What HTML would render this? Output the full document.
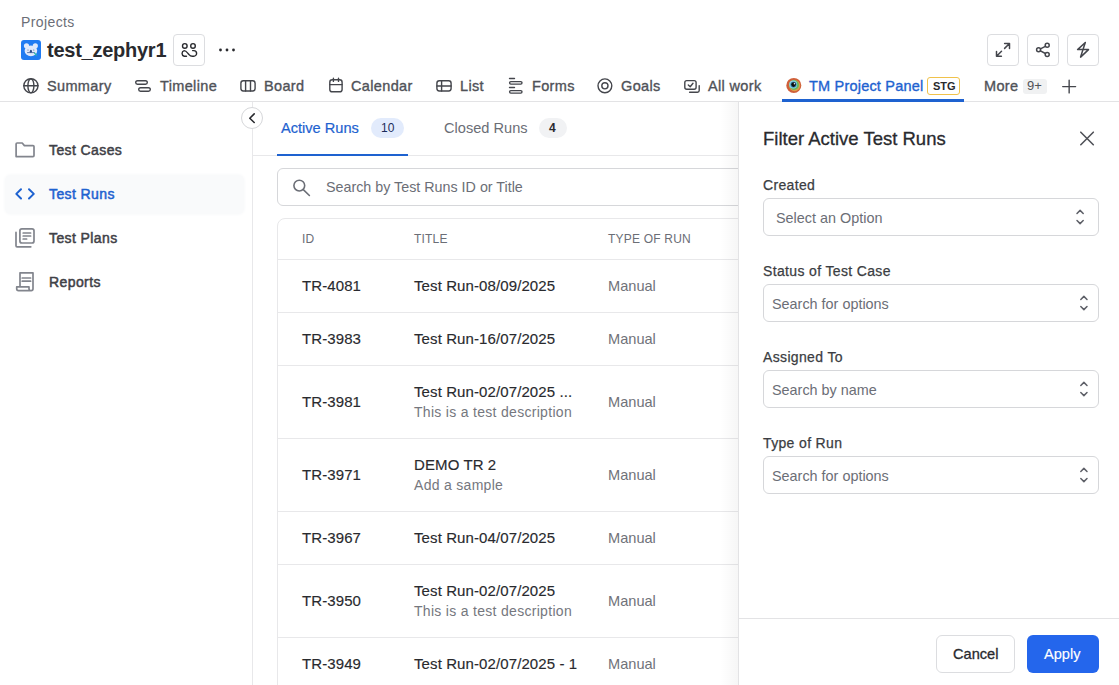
<!DOCTYPE html>
<html><head><meta charset="utf-8">
<style>
*{box-sizing:border-box;margin:0;padding:0}
html,body{width:1119px;height:685px;overflow:hidden;background:#fff;font-family:"Liberation Sans",sans-serif;color:#292a2e}
.a{position:absolute;white-space:nowrap}
.nav{font-size:14.5px;color:#505258;top:78px;line-height:16px;letter-spacing:0.35px;-webkit-text-stroke-width:0.35px}
.btn{position:absolute;border:1px solid #dcdde0;border-radius:4px;background:#fff}
.sb{font-size:14px;color:#3f4147;line-height:16px;letter-spacing:0.4px;-webkit-text-stroke-width:0.5px}
.th{font-size:12px;color:#6b6e76;line-height:14px;letter-spacing:0.2px}
.row{position:absolute;left:278px;width:462px;height:1px;background:#e8e8ea}
.id,.ti{font-size:15px;color:#292a2e;line-height:17px;-webkit-text-stroke-width:0.15px;letter-spacing:0.1px}
.de{font-size:14px;color:#75777e;line-height:17px;letter-spacing:0.3px}
.ty{font-size:14.6px;color:#707279;line-height:17px}
.lbl{font-size:14px;color:#3b3d42;line-height:16px;letter-spacing:0.35px;-webkit-text-stroke-width:0.25px}
.sel{position:absolute;left:763px;width:336px;height:38px;border:1px solid #d6d7da;border-radius:6px;background:#fff}
.ph{font-size:14.4px;color:#6b6e76;line-height:17px}
#ic{position:absolute;left:0;top:0}
</style></head><body>

<!-- header -->
<div class="a" style="left:21px;top:14px;font-size:14px;color:#6b6e76;line-height:16px;letter-spacing:0.4px">Projects</div>
<div class="a" style="left:21px;top:40px;width:20px;height:20px;border-radius:3px;background:#1f7bf2"></div>
<div class="a" style="left:47px;top:39px;font-size:20px;font-weight:bold;color:#292a2e;line-height:22px;letter-spacing:-0.25px">test_zephyr1</div>
<div class="btn" style="left:173px;top:34px;width:32px;height:32px"></div>

<div class="btn" style="left:987px;top:34px;width:32px;height:32px"></div>
<div class="btn" style="left:1027px;top:34px;width:32px;height:32px"></div>
<div class="btn" style="left:1067px;top:34px;width:32px;height:32px"></div>

<div class="a nav" style="left:47px">Summary</div>
<div class="a nav" style="left:160px">Timeline</div>
<div class="a nav" style="left:264px">Board</div>
<div class="a nav" style="left:351px">Calendar</div>
<div class="a nav" style="left:460px">List</div>
<div class="a nav" style="left:532px">Forms</div>
<div class="a nav" style="left:621px">Goals</div>
<div class="a nav" style="left:708px">All work</div>
<div class="a nav" style="left:809px;color:#1e62d0;letter-spacing:0.2px">TM Project Panel</div>
<div class="a" style="left:927px;top:77px;width:33px;height:18px;border:1px solid #f0c24b;border-radius:3px"></div>
<div class="a" style="left:933px;top:80px;font-size:11px;font-weight:bold;line-height:13px;color:#292a2e">STG</div>
<div class="a nav" style="left:984px">More</div>
<div class="a" style="left:1023px;top:79px;width:24px;height:15px;border-radius:3px;background:#f0f1f2"></div>
<div class="a" style="left:1027px;top:78px;font-size:13px;line-height:15px;color:#505258">9+</div>
<div class="a" style="left:0;top:101px;width:1119px;height:1px;background:#e3e3e5"></div>
<div class="a" style="left:782px;top:99px;width:182px;height:3px;background:#1e62d0"></div>

<!-- sidebar -->
<div class="a" style="left:252px;top:102px;width:1px;height:583px;background:#e8e8ea"></div>
<div class="a" style="left:5px;top:175px;width:239px;height:39px;border-radius:6px;background:#f9fafb;box-shadow:0 0 3px 1px #f9fafb"></div>
<div class="a sb" style="left:49px;top:142px">Test Cases</div>
<div class="a sb" style="left:49px;top:186px;color:#1e62d0">Test Runs</div>
<div class="a sb" style="left:49px;top:230px">Test Plans</div>
<div class="a sb" style="left:49px;top:274px">Reports</div>
<div class="a" style="left:241px;top:107px;width:22px;height:22px;border-radius:50%;border:1px solid #d6d7da;background:#fff"></div>

<!-- main tabs -->
<div class="a" style="left:281px;top:120px;font-size:14.6px;color:#1e62d0;line-height:17px;-webkit-text-stroke-width:0.2px">Active Runs</div>
<div class="a" style="left:371px;top:118px;width:33px;height:20px;border-radius:10px;background:#e2ebfc"></div>
<div class="a" style="left:381px;top:121px;font-size:12px;color:#1c2b5a;line-height:14px">10</div>
<div class="a" style="left:444px;top:120px;font-size:14.6px;color:#6b6e76;line-height:17px">Closed Runs</div>
<div class="a" style="left:539px;top:118px;width:28px;height:20px;border-radius:10px;background:#f1f2f4"></div>
<div class="a" style="left:549px;top:121px;font-size:12px;font-weight:bold;color:#292a2e;line-height:14px">4</div>
<div class="a" style="left:253px;top:155px;width:485px;height:1px;background:#e8e8ea"></div>
<div class="a" style="left:277px;top:154px;width:131px;height:2px;background:#1e62d0"></div>

<div class="a" style="left:277px;top:168px;width:480px;height:38px;border:1px solid #d6d7da;border-radius:6px"></div>
<div class="a" style="left:326px;top:179px;font-size:14.3px;color:#6b6e76;line-height:17px">Search by Test Runs ID or Title</div>

<div class="a" style="left:277px;top:218px;width:480px;height:500px;border:1px solid #e8e8ea;border-radius:8px"></div>
<div class="a th" style="left:302px;top:232px">ID</div>
<div class="a th" style="left:414px;top:232px">TITLE</div>
<div class="a th" style="left:608px;top:232px">TYPE OF RUN</div>

<div class="row" style="top:259px"></div>
<div class="row" style="top:312px"></div>
<div class="row" style="top:365px"></div>
<div class="row" style="top:438px"></div>
<div class="row" style="top:511px"></div>
<div class="row" style="top:564px"></div>
<div class="row" style="top:637px"></div>

<div class="a id" style="left:302px;top:277px">TR-4081</div>
<div class="a ti" style="left:414px;top:277px">Test Run-08/09/2025</div>
<div class="a ty" style="left:608px;top:278px">Manual</div>

<div class="a id" style="left:302px;top:330px">TR-3983</div>
<div class="a ti" style="left:414px;top:330px">Test Run-16/07/2025</div>
<div class="a ty" style="left:608px;top:331px">Manual</div>

<div class="a id" style="left:302px;top:393px">TR-3981</div>
<div class="a ti" style="left:414px;top:383px">Test Run-02/07/2025 ...</div>
<div class="a de" style="left:414px;top:404px">This is a test description</div>
<div class="a ty" style="left:608px;top:394px">Manual</div>

<div class="a id" style="left:302px;top:466px">TR-3971</div>
<div class="a ti" style="left:414px;top:456px">DEMO TR 2</div>
<div class="a de" style="left:414px;top:477px">Add a sample</div>
<div class="a ty" style="left:608px;top:467px">Manual</div>

<div class="a id" style="left:302px;top:529px">TR-3967</div>
<div class="a ti" style="left:414px;top:529px">Test Run-04/07/2025</div>
<div class="a ty" style="left:608px;top:530px">Manual</div>

<div class="a id" style="left:302px;top:592px">TR-3950</div>
<div class="a ti" style="left:414px;top:582px">Test Run-02/07/2025</div>
<div class="a de" style="left:414px;top:603px">This is a test description</div>
<div class="a ty" style="left:608px;top:593px">Manual</div>

<div class="a id" style="left:302px;top:655px">TR-3949</div>
<div class="a ti" style="left:414px;top:655px">Test Run-02/07/2025 - 1</div>
<div class="a ty" style="left:608px;top:656px">Manual</div>

<!-- filter panel -->
<div class="a" style="left:720px;top:102px;width:18px;height:583px;background:linear-gradient(to right,rgba(0,0,0,0),rgba(0,0,0,0.035))"></div>
<div class="a" style="left:738px;top:102px;width:381px;height:583px;background:#fff;border-left:1px solid #e3e3e5"></div>
<div class="a" style="left:763px;top:128px;font-size:18.5px;-webkit-text-stroke-width:0.3px;color:#292a2e;line-height:21px">Filter Active Test Runs</div>

<div class="a lbl" style="left:763px;top:177px">Created</div>
<div class="sel" style="top:198px"></div>
<div class="a ph" style="left:776px;top:210px">Select an Option</div>

<div class="a lbl" style="left:763px;top:263px">Status of Test Case</div>
<div class="sel" style="top:284px"></div>
<div class="a ph" style="left:772px;top:296px">Search for options</div>

<div class="a lbl" style="left:763px;top:349px">Assigned To</div>
<div class="sel" style="top:370px"></div>
<div class="a ph" style="left:772px;top:382px">Search by name</div>

<div class="a lbl" style="left:763px;top:435px">Type of Run</div>
<div class="sel" style="top:456px"></div>
<div class="a ph" style="left:772px;top:468px">Search for options</div>

<div class="a" style="left:739px;top:618px;width:380px;height:1px;background:#e3e3e5"></div>
<div class="btn" style="left:936px;top:635px;width:79px;height:38px;border-radius:6px"></div>
<div class="a" style="left:953px;top:646px;font-size:14.6px;color:#292a2e;line-height:17px;-webkit-text-stroke-width:0.3px">Cancel</div>
<div class="a" style="left:1027px;top:635px;width:72px;height:38px;border-radius:6px;background:#2466ec"></div>
<div class="a" style="left:1044px;top:646px;font-size:14.6px;color:#fff;line-height:17px;-webkit-text-stroke-width:0.15px">Apply</div>

<!-- icons overlay -->
<svg id="ic" width="1119" height="685" viewBox="0 0 1119 685" fill="none" stroke-linecap="round" stroke-linejoin="round">
  <!-- people -->
  <g stroke="#292a2e" stroke-width="1.4">
    <circle cx="184.8" cy="45.9" r="2.3"/>
    <circle cx="193" cy="45.9" r="2.3"/>
    <path d="M186.5 56.2 H184.2 a2.9 2.9 0 0 1 0 -5.6 c2.2 0 3.2 2.4 4.8 4 c0.8 0.9 1.8 1.6 3.3 1.6 h1.5 a2.8 2.8 0 0 0 0 -5.6 h-1.2"/>
  </g>
  <g fill="#292a2e"><circle cx="220.5" cy="50" r="1.4"/><circle cx="227" cy="50" r="1.4"/><circle cx="233.5" cy="50" r="1.4"/></g>
  <!-- right buttons -->
  <g stroke="#44464c" stroke-width="1.5">
    <path d="M1004.6 43.5 H1009.5 V48.4 M1009.2 43.8 L1004.6 48.4 M996.5 51.4 V56.3 H1001.4 M996.8 56 L1001.5 51.3"/>
    <circle cx="1038.6" cy="49.8" r="2"/><circle cx="1047.2" cy="45.3" r="2"/><circle cx="1047.2" cy="54.5" r="2"/>
    <path d="M1040.4 48.9 L1045.4 46.3 M1040.4 50.8 L1045.4 53.5"/>
    <path d="M1085.3 42.5 L1077.6 49.6 H1088.5 L1080.6 57.1 L1083 49.6 Z"/>
  </g>
  <!-- nav icons -->
  <g stroke="#44464c" stroke-width="1.4">
    <circle cx="30.9" cy="85.8" r="7.1"/>
    <path d="M23.8 85.8 H38"/>
    <ellipse cx="30.9" cy="85.8" rx="3" ry="7.1"/>
    <rect x="135.7" y="80.7" width="11.6" height="3.6" rx="1.8"/>
    <rect x="138.7" y="87.7" width="11.6" height="3.6" rx="1.8"/>
    <rect x="240.9" y="80.8" width="14.2" height="10.2" rx="2.4"/>
    <path d="M245.6 80.8 V91 M250.5 80.8 V91"/>
    <rect x="329.8" y="79.8" width="12.3" height="12" rx="2.4"/>
    <path d="M329.8 84.6 H342.1 M333.4 78.3 V81.4 M338.5 78.3 V81.4"/>
    <rect x="436.9" y="80.8" width="14.2" height="10.2" rx="2.4"/>
    <path d="M436.9 86 H451.1 M441.6 80.8 V91"/>
    <path d="M509.5 78.5 H514.5"/>
    <rect x="509.6" y="81.6" width="12.4" height="2.5" rx="1.25"/>
    <path d="M509.5 87.5 H514.5"/>
    <rect x="509.6" y="90.6" width="12.4" height="2.5" rx="1.25"/>
    <circle cx="604.9" cy="85.8" r="6.9"/>
    <circle cx="604.9" cy="85.8" r="3.1"/>
    <rect x="684.8" y="80.6" width="11.3" height="8.6" rx="2"/>
    <path d="M688.3 85 L690.2 86.7 L693 83.2"/>
    <path d="M699.2 85.6 V90.5 a1.7 1.7 0 0 1 -1.7 1.7 H689.6"/>
    <path d="M1062.7 86.6 H1075.6 M1069.15 80.3 V92.9"/>
  </g>
  <!-- TM eye icon -->
  <circle cx="793.8" cy="85.4" r="7.5" fill="#d0603a"/>
  <circle cx="794.6" cy="85.6" r="5.6" fill="#dda048"/>
  <circle cx="794" cy="85" r="4.9" fill="#67b85a"/>
  <circle cx="793.2" cy="84.5" r="4" fill="#9ad3e6"/>
  <circle cx="793.5" cy="84.6" r="3.2" fill="#3d9cc0"/>
  <circle cx="793.5" cy="84.6" r="2.3" fill="#0d0d0d"/>
  <circle cx="794.4" cy="83.8" r="0.7" fill="#fff"/>
  <!-- project koala -->
  <g fill="#dfe9fb">
    <circle cx="26.5" cy="45.8" r="2.6"/><circle cx="35.3" cy="45.8" r="2.6"/>
    <ellipse cx="30.9" cy="50.8" rx="6.3" ry="5.4"/>
  </g>
  <g fill="#2a4a8a"><ellipse cx="30.9" cy="51.2" rx="1.1" ry="1.5"/><circle cx="28" cy="50" r="0.5"/><circle cx="33.8" cy="50" r="0.5"/></g>
  <path d="M27.5 52.6 H34.3" stroke="#2a4a8a" stroke-width="0.7"/>
  <path d="M34.5 53 L36.3 55.2" stroke="#2bb9a8" stroke-width="1.2"/>
  <!-- collapse chevron -->
  <path d="M254.2 113.9 L249.8 118.2 L254.2 122.5" stroke="#292a2e" stroke-width="1.6"/>
  <!-- sidebar icons -->
  <g stroke="#82858d" stroke-width="1.7">
    <path d="M16.1 156.6 V144 a1 1 0 0 1 1 -1 H22.2 L24.4 145.6 H33 a1 1 0 0 1 1 1 V155.6 a1 1 0 0 1 -1 1 Z"/>
    <rect x="19.9" y="228.8" width="14.1" height="14.2" rx="2"/>
    <path d="M23.2 233 H30.6 M23.2 236 H30.6 M23.2 239 H26.6"/>
    <path d="M16 232.4 V245.8 a1 1 0 0 0 1 1 H30.8"/>
    <path d="M20 286.6 V272.8 H33 V288.8 a1.8 1.8 0 0 1 -1.8 1.8 H18.5 a1.8 1.8 0 0 1 -1.8 -1.8 V286.9 H29 V288.8 a1.8 1.8 0 0 0 1.8 1.8"/>
    <path d="M22.2 278 H30.6 M22.2 281.2 H30.6"/>
  </g>
  <path d="M21 189.3 L16.3 193.9 L21 198.5 M29 189.3 L33.8 193.9 L29 198.5" stroke="#1e62d0" stroke-width="2"/>
  <!-- search icon -->
  <g stroke="#6b6e76" stroke-width="1.6"><circle cx="299.3" cy="185.6" r="5.4"/><path d="M303.3 189.6 L309.4 195.5"/></g>
  <!-- close X -->
  <path d="M1080.8 132.2 L1093.3 144.7 M1093.3 132.2 L1080.8 144.7" stroke="#505258" stroke-width="1.6"/>
  <!-- select chevrons -->
  <g stroke="#5e6068" stroke-width="1.5">
    <path d="M1077 213.5 L1080.1 210.4 L1083.2 213.5 M1077 220.5 L1080.1 223.6 L1083.2 220.5"/>
    <path d="M1080.8 299.5 L1083.9 296.4 L1087 299.5 M1080.8 306.5 L1083.9 309.6 L1087 306.5"/>
    <path d="M1080.8 385.5 L1083.9 382.4 L1087 385.5 M1080.8 392.5 L1083.9 395.6 L1087 392.5"/>
    <path d="M1080.8 471.5 L1083.9 468.4 L1087 471.5 M1080.8 478.5 L1083.9 481.6 L1087 478.5"/>
  </g>
</svg>

</body></html>
